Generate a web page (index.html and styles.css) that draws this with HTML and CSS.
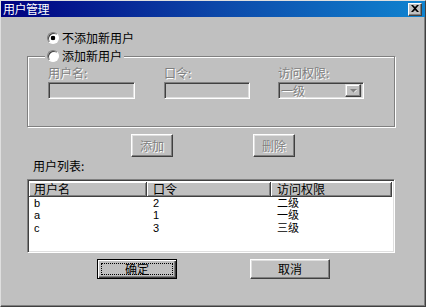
FILE: index.html
```html
<!DOCTYPE html>
<html lang="zh">
<head>
<meta charset="utf-8">
<title>用户管理</title>
<link rel="stylesheet" href="styles.css">
</head>
<body>
<div class="window">
  <div class="titlebar">
    <span class="title">用户管理</span>
    <span class="close"><svg width="8" height="7" viewBox="0 0 8 7"><path d="M0 0h2l2 2 2-2h2L5 3.5 8 7H6L4 5 2 7H0l3-3.5z" fill="#000"/></svg></span>
  </div>
  <div class="content">
    <div class="radio"><span class="dot checked"></span><span>不添加新用户</span></div>
    <fieldset class="group">
      <legend class="legend"><span class="radio"><span class="dot"></span><span>添加新用户</span></span></legend>
      <div class="fields">
        <div class="field f1"><span class="lbl">用户名:</span><span class="input w87"></span></div>
        <div class="field f2"><span class="lbl">口令:</span><span class="input w86"></span></div>
        <div class="field f3"><span class="lbl">访问权限:</span>
          <span class="input combo"><span class="combo-text">一级</span><span class="drop"><svg width="7" height="5" viewBox="0 0 7 5"><path d="M1 1h5L3.5 3.5z" fill="#fff" transform="translate(1 1)"/><path d="M0 0h7L3.5 3.5z" fill="#808080" transform="translate(0 1)"/></svg></span></span>
        </div>
      </div>
    </fieldset>
    <div class="actions">
      <span class="btn small disabled">添加</span>
      <span class="btn small disabled">删除</span>
    </div>
    <div class="listlabel">用户列表:</div>
    <div class="list">
      <div class="row head">
        <span class="cell c1">用户名</span><span class="cell c2">口令</span><span class="cell c3">访问权限</span>
      </div>
      <div class="row"><span class="cell c1">b</span><span class="cell c2">2</span><span class="cell c3">二级</span></div>
      <div class="row"><span class="cell c1">a</span><span class="cell c2">1</span><span class="cell c3">一级</span></div>
      <div class="row"><span class="cell c1">c</span><span class="cell c2">3</span><span class="cell c3">三级</span></div>
    </div>
    <div class="footer">
      <span class="btn wide default"><span class="focus">确定</span></span>
      <span class="btn wide">取消</span>
    </div>
  </div>
</div>
</body>
</html>
```

FILE: styles.css
```css
html, body {
  margin: 0;
  padding: 0;
  background: #c0c0c0;
}
body {
  font-family: "Noto Sans CJK SC", "Noto Sans", sans-serif;
  font-size: 12px;
  line-height: 14px;
  color: #000;
}
.window {
  width: 426px;
  height: 307px;
  box-sizing: border-box;
  background: #c0c0c0;
  border: 1px solid;
  border-color: #dfdfdf #404040 #404040 #dfdfdf;
  box-shadow: inset -1px -1px 0 #808080;
  overflow: hidden;
}
.titlebar {
  height: 16px;
  display: flex;
  align-items: center;
  justify-content: space-between;
  padding: 0 3px 0 2px;
  background: linear-gradient(90deg, #000080 0%, #0c46a8 50%, #1084d0 100%);
  color: #fff;
}
.title {
  font-size: 12px;
  line-height: 14px;
  letter-spacing: -0.5px;
}
.close {
  width: 14px;
  height: 13px;
  box-sizing: border-box;
  display: flex;
  align-items: center;
  justify-content: center;
  background: #c0c0c0;
  border: 1px solid;
  border-color: #fff #404040 #404040 #fff;
  box-shadow: inset -1px -1px 0 #808080;
  padding-bottom: 1px;
}
.content {
  padding: 14px 0 0 26px;
}
.radio {
  display: flex;
  align-items: center;
  height: 14px;
  margin-left: 20px;
}
.legend .radio {
  margin-left: 0;
}
.dot {
  width: 12px;
  height: 12px;
  box-sizing: border-box;
  border-radius: 50%;
  border: 1px solid;
  border-color: #808080 #fff #fff #808080;
  box-shadow: inset 1px 1px 0 #404040;
  background: #fff;
  margin-right: 3px;
  flex: none;
}
.dot.checked {
  background: radial-gradient(circle, #000 0, #000 2px, #fff 2.6px);
}
.group {
  margin: 4px 0 0 0;
  width: 368px;
  box-sizing: border-box;
  padding: 3px 0 27px 20px;
  border: 1px solid #808080;
  box-shadow: 1px 1px 0 #fff, inset 1px 1px 0 #fff;
  min-width: 0;
}
.legend {
  padding: 0 2px;
  margin-left: -3px;
  line-height: 14px;
  height: 14px;
  background: #c0c0c0;
}
.fields {
  display: flex;
}
.field {
  display: flex;
  flex-direction: column;
  align-items: flex-start;
}
.f1 { width: 116px; }
.f2 { width: 114px; }
.lbl {
  color: #808080;
  text-shadow: 1px 1px 0 #fff;
  line-height: 14px;
  margin-bottom: 2px;
}
.input {
  height: 17px;
  box-sizing: border-box;
  border: 1px solid;
  border-color: #808080 #fff #fff #808080;
  box-shadow: inset 1px 1px 0 #404040, inset -1px -1px 0 #dfdfdf;
  background: #c0c0c0;
}
.w87 { width: 87px; }
.w86 { width: 86px; }
.combo {
  width: 86px;
  display: flex;
  align-items: center;
  justify-content: space-between;
  padding: 2px 2px 2px 2px;
}
.combo-text {
  color: #808080;
  text-shadow: 1px 1px 0 #fff;
  line-height: 12px;
  font-size: 12px;
}
.drop {
  width: 16px;
  height: 13px;
  box-sizing: border-box;
  display: flex;
  align-items: center;
  justify-content: center;
  background: #c0c0c0;
  border: 1px solid;
  border-color: #dfdfdf #404040 #404040 #dfdfdf;
  box-shadow: inset -1px -1px 0 #808080, inset 1px 1px 0 #fff;
}
.actions {
  display: flex;
  gap: 80px;
  margin-top: 7px;
  padding-left: 104px;
}
.btn {
  box-sizing: border-box;
  display: flex;
  align-items: center;
  justify-content: center;
  background: #c0c0c0;
  border: 1px solid;
  border-color: #fff #404040 #404040 #fff;
  box-shadow: inset -1px -1px 0 #808080, inset 1px 1px 0 #dfdfdf;
}
.btn.small {
  width: 42px;
  height: 23px;
}
.btn.disabled {
  color: #808080;
  text-shadow: 1px 1px 0 #fff;
}
.btn.wide {
  width: 80px;
  height: 20px;
}
.btn.default {
  border: 1px solid #000;
  box-shadow: inset 1px 1px 0 #fff, inset -1px -1px 0 #404040, inset -2px -2px 0 #808080;
  padding: 3px;
}
.focus {
  flex: 1;
  align-self: stretch;
  display: flex;
  align-items: center;
  justify-content: center;
  border: 1px dotted #000;
}
.listlabel {
  margin-top: 2px;
  padding-left: 6px;
  line-height: 14px;
}
.list {
  margin-top: 6px;
  width: 368px;
  height: 74px;
  box-sizing: border-box;
  background: #fff;
  border: 1px solid;
  border-color: #808080 #fff #fff #808080;
  box-shadow: inset 1px 1px 0 #404040, inset -1px -1px 0 #dfdfdf;
  padding: 2px 2px 0 1px;
}
.row {
  display: grid;
  grid-template-columns: 118px 124px 1fr;
  font-family: "Liberation Sans", "Noto Sans CJK SC", sans-serif;
  font-size: 11px;
  line-height: 12.4px;
  height: 12.4px;
}
.row.head {
  font-family: "Noto Sans CJK SC", "Noto Sans", sans-serif;
  font-size: 12px;
  height: 15px;
  line-height: 13px;
  margin-bottom: 0;
}
.head .cell {
  background: #c0c0c0;
  border-right: 1px solid #404040;
  border-bottom: 1px solid #404040;
  box-shadow: inset 1px 1px 0 #fff, inset -1px -1px 0 #808080;
}
.cell.c1 { padding-left: 5px; }
.cell.c2 { padding-left: 6px; }
.cell.c3 { padding-left: 6px; }
.footer {
  display: flex;
  gap: 73px;
  margin-top: 6px;
  padding-left: 70px;
}
```
